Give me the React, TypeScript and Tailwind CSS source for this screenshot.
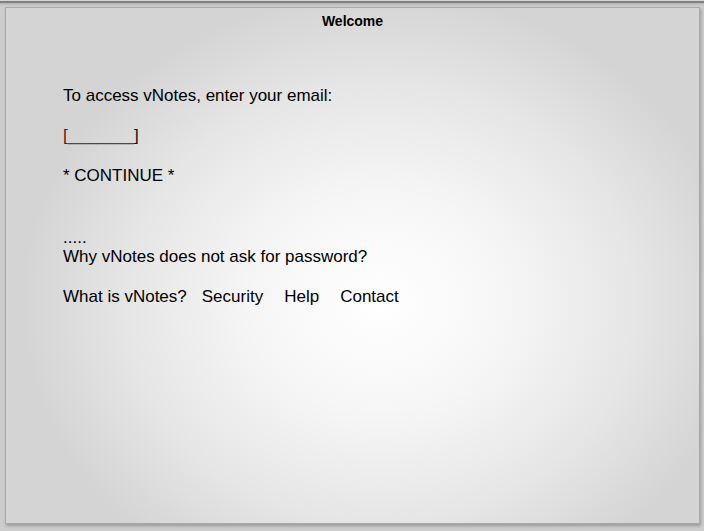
export default function App() {
  return (
    <div
      className="w-[704px] h-[531px] bg-[#cdcdcd] overflow-hidden relative"
      style={{ fontFamily: '"Liberation Sans", Arial, sans-serif' }}
    >
      {/* top edge of the window chrome */}
      <div className="h-[1px] bg-[#d6d6d6]" />
      <div className="h-[2px] bg-[#808080]" />
      <div className="h-[3px] bg-gradient-to-b from-[#b4b4b4] to-[#cdcdcd]" />

      {/* panel */}
      <div className="ml-[5px] w-[695px] mt-[1px] h-[517px] border border-[#a9a9a9] shadow-[1px_2px_3px_rgba(0,0,0,0.25)] bg-[radial-gradient(ellipse_360px_310px_at_375px_295px,#ffffff_0%,#f6f6f6_35%,#e6e6e6_70%,#d4d4d4_100%)] text-black">
        <div className="text-center text-[14px] font-bold leading-[16px] pt-[5px]">Welcome</div>

        <div className="pl-[57px] pt-[57px] text-[17px] leading-[19px]">
          <p>To access vNotes, enter your email:</p>
          <p className="mt-[21px]">
            <span className="text-[#6a1010]">[</span>
            <span className="text-[#4a4a4a]">_______</span>
            <span className="text-[#111]">]</span>
          </p>
          <p className="mt-[21px]">* CONTINUE *</p>
          <p className="mt-[43px]">
            .....
            <br />
            Why vNotes does not ask for password?
          </p>
          <p className="mt-[21px] flex">
            <span>What is vNotes?</span>
            <span className="ml-[15px]">Security</span>
            <span className="ml-[21px]">Help</span>
            <span className="ml-[21px]">Contact</span>
          </p>
        </div>
      </div>
    </div>
  )
}
